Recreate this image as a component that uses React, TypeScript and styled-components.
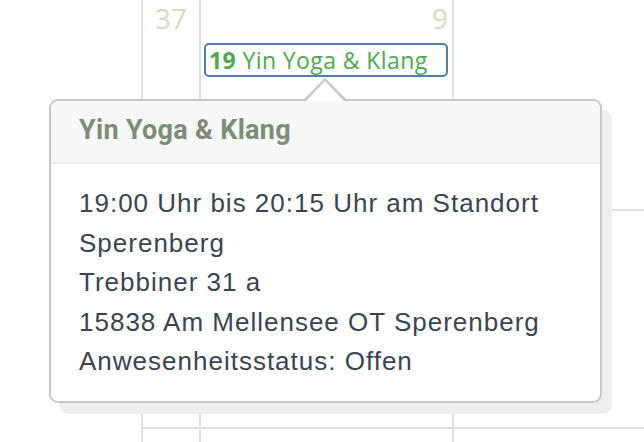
import React from "react";
import styled, { createGlobalStyle } from "styled-components";

const GlobalStyle = createGlobalStyle`
  html, body {
    margin: 0;
    padding: 0;
    background: #ffffff;
  }
  * {
    box-sizing: border-box;
  }
`;

interface Line {
  text: string;
}

const details: Line[] = [
  { text: "19:00 Uhr bis 20:15 Uhr am Standort" },
  { text: "Sperenberg" },
  { text: "Trebbiner 31 a" },
  { text: "15838 Am Mellensee OT Sperenberg" },
  { text: "Anwesenheitsstatus: Offen" },
];

const App = () => {
  return (
    <Page>
      <GlobalStyle />
      <Calendar>
        <Spacer />
        <Column $width={58}>
          <Cell $height={429}>
            <WeekNumber>37</WeekNumber>
          </Cell>
          <Cell $height={40} />
        </Column>
        <Column $width={253}>
          <Cell $height={429}>
            <DayNumber>9</DayNumber>
            <Event>
              <b>19</b> Yin Yoga &amp; Klang
            </Event>
          </Cell>
          <Cell $height={40} />
        </Column>
        <Column $grow>
          <Cell $height={211} />
          <Cell $height={218} />
          <Cell $height={40} />
        </Column>
      </Calendar>

      <Popover>
        <PopoverHeader>Yin Yoga &amp; Klang</PopoverHeader>
        <PopoverBody>
          {details.map((el, i) => (
            <div key={i + 1}>{el.text}</div>
          ))}
        </PopoverBody>
      </Popover>
    </Page>
  );
};

const Page = styled.div`
  position: relative;
  width: 644px;
  height: 442px;
  overflow: hidden;
  background: #ffffff;
`;

const Calendar = styled.div`
  display: flex;
  width: 100%;
  height: 100%;
`;

const Spacer = styled.div`
  width: 141px;
  flex-shrink: 0;
`;

const Column = styled.div<{ $width?: number; $grow?: boolean }>`
  display: flex;
  flex-direction: column;
  flex: ${(p) => (p.$grow ? "1" : `0 0 ${p.$width}px`)};
  border-left: 2px solid #e0e0e0;
`;

const Cell = styled.div<{ $height: number }>`
  display: flex;
  flex-direction: column;
  flex-shrink: 0;
  height: ${(p) => p.$height}px;
  border-bottom: 2px solid #e0e0e0;
`;

const WeekNumber = styled.span`
  align-self: flex-end;
  padding-right: 12px;
  font-family: "Open Sans", sans-serif;
  font-size: 28px;
  line-height: 37px;
  color: #e2d6bf;
`;

const DayNumber = styled(WeekNumber)`
  padding-right: 4px;
`;

const Event = styled.div`
  margin: 6px 4px 0 3px;
  height: 34px;
  padding: 1px 3px 0;
  border: 2px solid #4e81ab;
  border-radius: 5px;
  font-family: "Open Sans", sans-serif;
  font-size: 23px;
  line-height: 28px;
  letter-spacing: 0.4px;
  color: #4cab4c;
  white-space: nowrap;

  b {
    font-weight: 700;
  }
`;

const Popover = styled.div`
  position: absolute;
  left: 49px;
  top: 99px;
  width: 553px;
  height: 304px;
  background: #ffffff;
  border: 2px solid #c8c8c8;
  border-radius: 9px;
  box-shadow: 10px 11px 0 #eeeeee;

  &::before,
  &::after {
    content: "";
    position: absolute;
    width: 0;
    height: 0;
    border-style: solid;
    border-color: transparent;
  }

  &::before {
    left: 252px;
    top: -23px;
    border-width: 0 22px 22px 22px;
    border-bottom-color: #c8c8c8;
  }

  &::after {
    left: 255px;
    top: -20px;
    border-width: 0 19px 20px 19px;
    border-bottom-color: #ffffff;
  }
`;

const PopoverHeader = styled.div`
  height: 63px;
  padding: 13px 28px 0;
  background: #f7f7f7;
  border-bottom: 2px solid #ebebeb;
  border-radius: 7px 7px 0 0;
  font-family: Roboto, "Noto Sans", sans-serif;
  font-weight: 700;
  font-size: 27px;
  line-height: 32px;
  letter-spacing: 0.3px;
  color: #7d8e76;
`;

const PopoverBody = styled.div`
  padding: 20px 28px 0;
  font-family: "Liberation Sans", Arial, sans-serif;
  font-size: 26px;
  line-height: 39.5px;
  letter-spacing: 1px;
  color: #3a4553;
`;

export default App;
